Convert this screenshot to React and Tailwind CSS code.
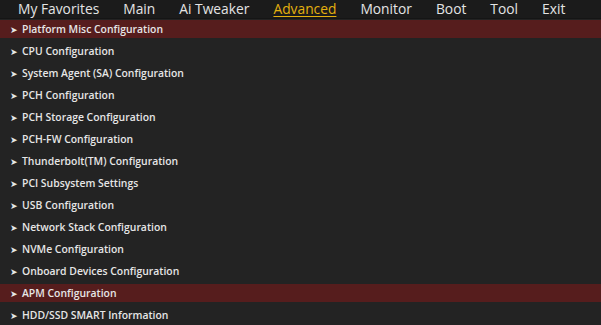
import React from "react";

const tabs = [
  { label: "My Favorites" },
  { label: "Main" },
  { label: "Ai Tweaker" },
  { label: "Advanced", active: true },
  { label: "Monitor" },
  { label: "Boot" },
  { label: "Tool" },
  { label: "Exit" },
];

const items = [
  { label: "Platform Misc Configuration", selected: true },
  { label: "CPU Configuration" },
  { label: "System Agent (SA) Configuration" },
  { label: "PCH Configuration" },
  { label: "PCH Storage Configuration" },
  { label: "PCH-FW Configuration" },
  { label: "Thunderbolt(TM) Configuration" },
  { label: "PCI Subsystem Settings" },
  { label: "USB Configuration" },
  { label: "Network Stack Configuration" },
  { label: "NVMe Configuration" },
  { label: "Onboard Devices Configuration" },
  { label: "APM Configuration", selected: true },
  { label: "HDD/SSD SMART Information" },
];

const App = () => {
  return (
    <div
      className="w-[601px] h-[325px] overflow-hidden bg-[#232323]"
      style={{ fontFamily: '"Open Sans", "DejaVu Sans", sans-serif' }}
    >
      {/* top tab bar */}
      <div className="h-[19px] bg-[#1b1b1b] border-b border-[#151515] flex items-center pl-[18px] gap-[24px] text-[13.8px] leading-none text-[#e4e4e4] font-medium">
        {tabs.map((t) => (
          <span
            key={t.label}
            className={
              t.active
                ? "text-[#e3b00e] underline underline-offset-[2px] decoration-[1px]"
                : ""
            }
          >
            {t.label}
          </span>
        ))}
      </div>

      {/* menu items */}
      <div className="flex flex-col gap-[4px] pt-[1px]">
        {items.map((item) => (
          <div
            key={item.label}
            className={`h-[18px] flex items-center pl-[10px] text-[10.4px] font-semibold text-[#e6e6e6] ${
              item.selected ? "bg-[#561d1d]" : ""
            }`}
          >
            <span className="w-[12px] text-[9px] pt-[1px]">➤</span>
            <span className="pt-[1px]">{item.label}</span>
          </div>
        ))}
      </div>
    </div>
  );
};

export default App;
